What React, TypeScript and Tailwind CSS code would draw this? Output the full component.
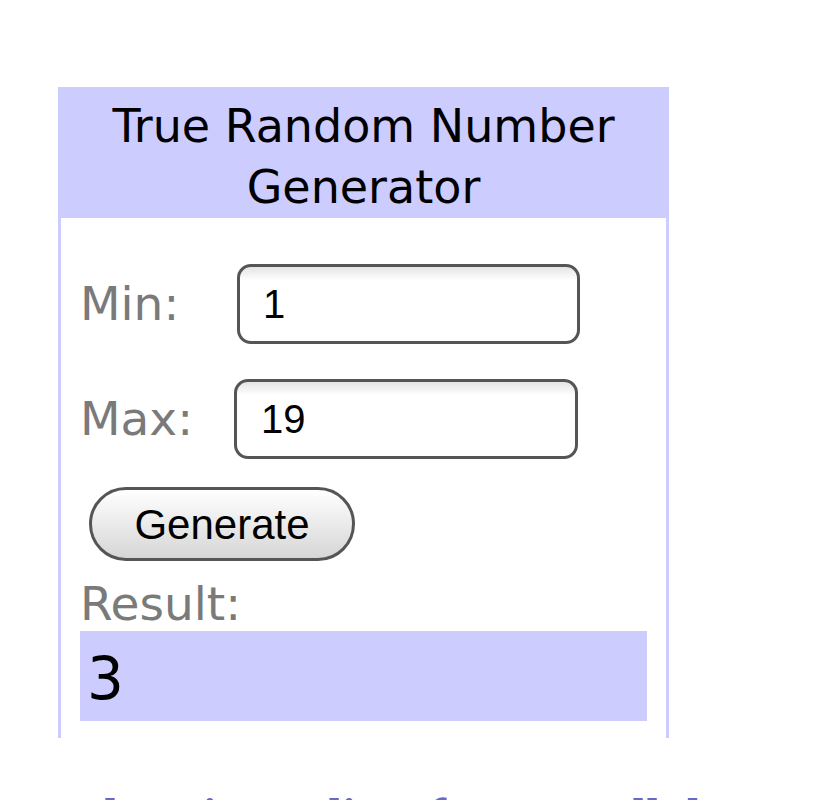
import React from "react";

export default function App() {
  return (
    <div className="w-[823px] h-[800px] overflow-hidden bg-white relative">
      <div className="ml-[58px] pt-[87px]">
        <div className="w-[611px] h-[651px] overflow-hidden bg-[#ccccff] px-[3px] flex flex-col">
          <div
            className="h-[131px] shrink-0 pt-[9px] text-center text-black text-[46px] leading-[61px]"
            style={{ fontFamily: '"DejaVu Sans", sans-serif' }}
          >
            True Random Number
            <br />
            Generator
          </div>
          <div
            className="flex-1 bg-white px-[19px] pt-[46px]"
            style={{ fontFamily: '"DejaVu Sans", sans-serif' }}
          >
            <div className="flex items-center h-[80px]">
              <span className="w-[157px] shrink-0 text-[47px] text-[#7a7a7a]">Min:</span>
              <div
                className="w-[343px] h-[80px] rounded-[14px] border-[3px] border-[#555555] bg-[linear-gradient(#e4e4e4,#ffffff_18%)] flex items-center pl-[23px] text-[40px] text-black"
                style={{ fontFamily: '"Liberation Sans", Arial, sans-serif' }}
              >
                1
              </div>
            </div>
            <div className="flex items-center h-[80px] mt-[35px]">
              <span className="w-[154px] shrink-0 text-[47px] text-[#7a7a7a]">Max:</span>
              <div
                className="w-[344px] h-[80px] rounded-[14px] border-[3px] border-[#555555] bg-[linear-gradient(#e4e4e4,#ffffff_18%)] flex items-center pl-[24px] text-[40px] text-black"
                style={{ fontFamily: '"Liberation Sans", Arial, sans-serif' }}
              >
                19
              </div>
            </div>
            <div className="mt-[28px] ml-[9px]">
              <div
                className="w-[266px] h-[74px] rounded-full border-[3px] border-[#555555] bg-[linear-gradient(#ffffff,#d6d6d6)] flex items-center justify-center text-[42px] text-black"
                style={{ fontFamily: '"Liberation Sans", Arial, sans-serif' }}
              >
                Generate
              </div>
            </div>
            <div className="mt-[16px] text-[47px] leading-[53px] text-[#7a7a7a]">Result:</div>
            <div className="mt-[1px] h-[90px] bg-[#ccccff] pl-[7px] pt-[18px] text-[58px] text-black leading-[61px]">
              3
            </div>
          </div>
        </div>
      </div>
      <div
        className="mt-[53px] pl-[17px] whitespace-nowrap text-[50px] leading-[50px] font-bold text-[#6868c8]"
        style={{ fontFamily: '"Liberation Serif", "Times New Roman", serif' }}
      >
        T. The winner list of names all drawn
      </div>
    </div>
  );
}
